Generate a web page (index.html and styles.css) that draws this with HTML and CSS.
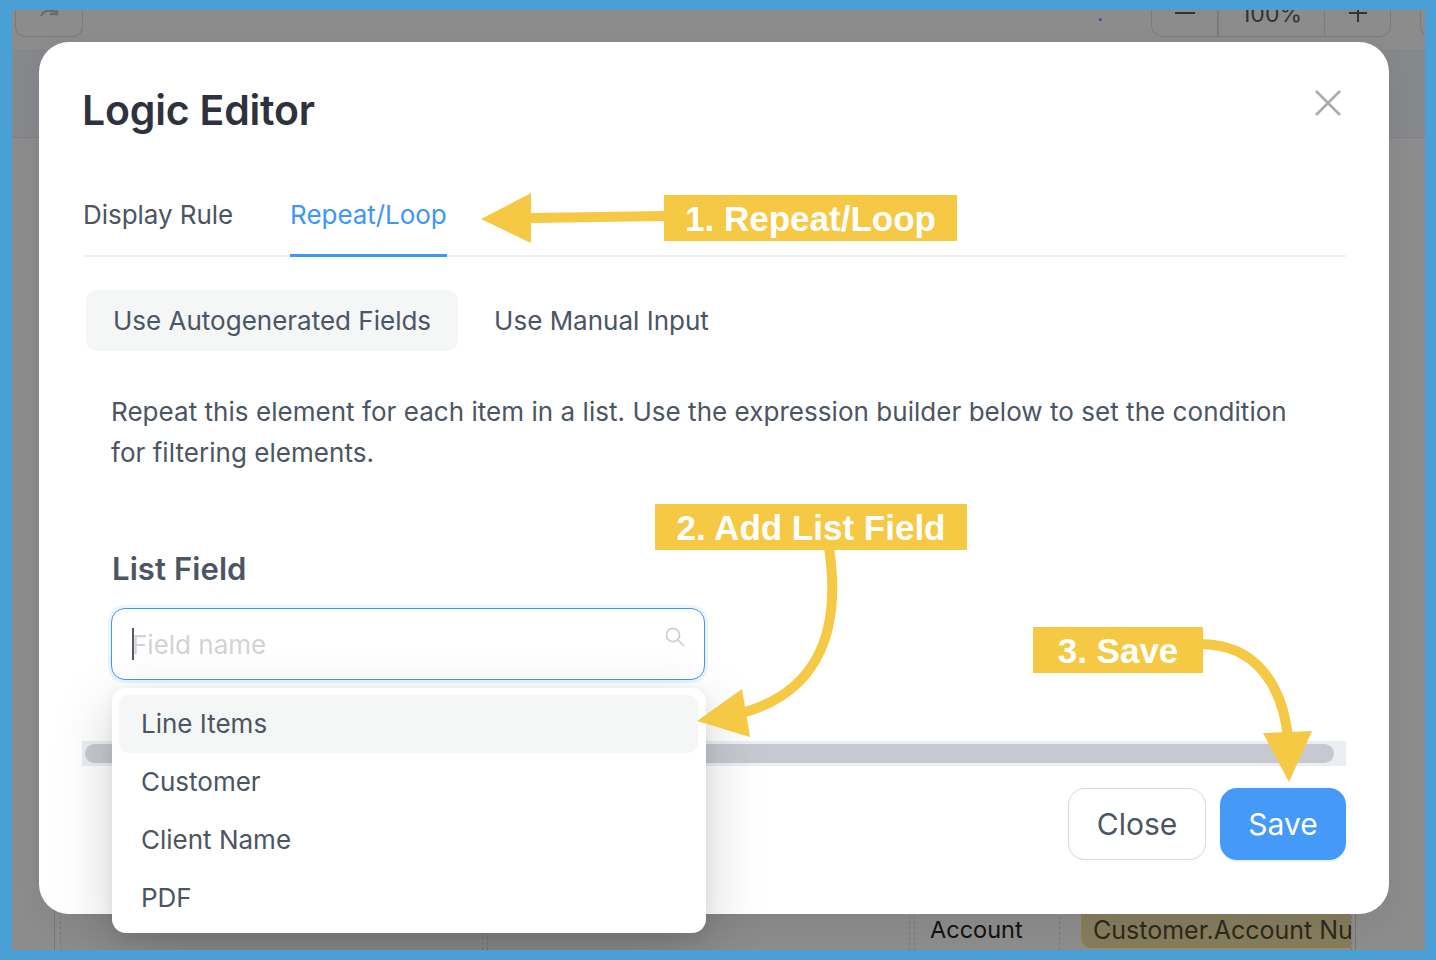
FILE: index.html
```html
<!DOCTYPE html>
<html lang="en">
<head>
<meta charset="utf-8">
<title>Logic Editor</title>
<link rel="stylesheet" href="styles.css">
</head>
<body>
<div class="frame">
  <div class="app">
    <div class="toolbar">
      <div class="redo">
        <svg class="redo-icon" viewBox="0 0 20 12"><path d="M2 11C5 5 11 4 18 8" /><path d="M18 1v8h-7" /></svg>
      </div>
      <span class="dot"></span>
      <div class="zoom-group">
        <span class="zoom-cell zoom-minus"><svg class="zoom-icon" viewBox="0 0 20 20"><path d="M0 10h20" /></svg></span>
        <span class="zoom-cell zoom-value">100%</span>
        <span class="zoom-cell zoom-plus"><svg class="zoom-icon" viewBox="0 0 20 20"><path d="M1 10h18M10 0v19" /></svg></span>
      </div>
      <div class="edge-btn"></div>
    </div>
    <div class="app-header"></div>
    <div class="app-body">
      <div class="sheet">
        <div class="cell cell-a"></div>
        <div class="cell cell-b"></div>
        <div class="cell cell-c">Account</div>
        <div class="cell cell-d"><span class="chip">Customer.Account Number</span></div>
      </div>
    </div>
  </div>

  <div class="modal">
    <h1 class="title">Logic Editor</h1>
    <button class="close-x" aria-label="Close">
      <svg viewBox="0 0 26 26"><path d="M1 1l24 24M25 1L1 25" /></svg>
    </button>
    <div class="tabs">
      <div class="tab">Display Rule</div>
      <div class="tab tab-active">Repeat/Loop</div>
    </div>
    <div class="segments">
      <div class="segment segment-on">Use Autogenerated Fields</div>
      <div class="segment">Use Manual Input</div>
    </div>
    <p class="intro">Repeat this element for each item in a list. Use the expression builder below to set the condition for filtering elements.</p>
    <div class="field-label">List Field</div>
    <div class="field">
      <div class="search">
        <span class="caret"></span>
        <span class="placeholder">Field name</span>
        <svg class="search-icon" viewBox="0 0 20 20"><circle cx="8" cy="8" r="6.6" /><path d="M13 13l6 6" /></svg>
      </div>
      <ul class="menu">
        <li class="menu-item menu-item-on">Line Items</li>
        <li class="menu-item">Customer</li>
        <li class="menu-item">Client Name</li>
        <li class="menu-item">PDF</li>
      </ul>
    </div>
    <div class="track"><div class="thumb"></div></div>
    <div class="footer">
      <button class="btn btn-close">Close</button>
      <button class="btn btn-save">Save</button>
    </div>
  </div>

  <svg class="arrows" viewBox="0 0 1436 960">
    <polygon class="fill" points="481,219 531,193 531,213 664,211 664,221 531,223 531,243" />
    <path class="line" d="M829 548C840 620 826 692 738 714" />
    <polygon class="fill" points="697,721 742,689 750,737" />
    <path class="line" d="M1200 644C1258 644 1283 688 1288 738" />
    <polygon class="fill" points="1263,733 1312,731 1289,782" />
  </svg>
  <div class="note note-1">1. Repeat/Loop</div>
  <div class="note note-2">2. Add List Field</div>
  <div class="note note-3">3. Save</div>
</div>
</body>
</html>
```
FILE: styles.css
```css
* { box-sizing: border-box; }
html, body { margin: 0; padding: 0; }
body { font-family: "Inter", "Liberation Sans", sans-serif; color: #4b5563; }

.frame {
  position: relative;
  width: 1436px;
  height: 960px;
  overflow: hidden;
  border-style: solid;
  border-color: #4a9fd4;
  border-width: 10px 11px 10px 12px;
  background: #8c8c8c;
}

/* dimmed application behind the dialog */
.app { display: flex; flex-direction: column; height: 100%; }
.toolbar {
  display: flex;
  align-items: flex-start;
  height: 41px;
  flex: none;
  overflow: hidden;
  border-bottom: 1px solid #858585;
}
.redo {
  width: 68px;
  height: 37px;
  margin: -10px 0 0 3px;
  flex: none;
  border: 1px solid #7b7b7b;
  border-top: 0;
  border-radius: 0 0 10px 10px;
  display: flex;
  justify-content: center;
}
.redo-icon { width: 20px; height: 12px; margin-top: 5px; fill: none; stroke: #6c6c6c; stroke-width: 2.4; }
.dot { width: 3px; height: 3px; border-radius: 50%; background: #2a55a8; margin: 8px 0 0 1016px; flex: none; }
.zoom-group {
  display: flex;
  height: 37px;
  margin: -10px 0 0 49px;
  flex: none;
  border: 1px solid #7b7b7b;
  border-top: 0;
  border-radius: 0 0 12px 12px;
  overflow: hidden;
  color: #333;
  font-size: 23px;
  line-height: 28px;
}
.zoom-cell { display: flex; justify-content: center; align-items: flex-start; }
.zoom-minus { width: 67px; border-right: 2px solid #7b7b7b; }
.zoom-value { width: 106px; border-right: 1px solid #7b7b7b; }
.zoom-plus { width: 65px; }
.zoom-icon { width: 20px; height: 20px; margin-top: 3px; fill: none; stroke: #333; stroke-width: 2; }
.edge-btn { width: 20px; height: 37px; margin: -10px 0 0 29px; border: 1px solid #7b7b7b; border-top: 0; border-right: 0; border-radius: 0 0 0 10px; flex: none; }
.app-header { height: 87px; flex: none; background: #87888c; border-bottom: 1px solid #808085; }
.app-body { flex: 1; display: flex; align-items: flex-end; }
.sheet {
  display: flex;
  height: 60px;
  margin-left: 42px;
  width: 1302px;
  border-left: 1px solid #767676;
  border-right: 1px solid #767676;
  flex: none;
  padding-left: 5px;
}
.cell { height: 100%; flex: none; border-left: 1px dashed #7a7a7a; }
.cell-a { width: 423px; margin-right: 4px; border-right: 1px dashed #7a7a7a; }
.cell-b { width: 423px; margin-right: 4px; border-right: 1px dashed #7a7a7a; }
.cell-c {
  width: 145px;
  padding: 23px 0 0 15px;
  color: #111;
  font-size: 23.5px;
  line-height: 34px;
}
.cell-d { width: 293px; padding-left: 21px; overflow: hidden; border-right: 1px dashed #7a7a7a; }
.chip {
  display: block;
  height: 50px;
  margin-top: 8px;
  padding: 14px 0 0 11px;
  width: 400px;
  white-space: nowrap;
  background: #857c5e;
  border: 1px solid #8f7f3f;
  border-radius: 10px;
  color: #2e2a18;
  font-size: 25px;
  line-height: 34px;
}

/* dialog */
.modal {
  position: absolute;
  left: 27px;
  top: 32px;
  width: 1350px;
  height: 872px;
  padding: 44px 43px 0 44px;
  background: #fff;
  border-radius: 30px;
  box-shadow: 0 10px 30px rgba(0, 0, 0, .06);
}
.title {
  margin: 0 0 0 -1px;
  font-size: 41px;
  line-height: 48px;
  font-weight: 600;
  letter-spacing: -.2px;
  color: #2e323e;
}
.close-x {
  position: absolute;
  top: 48px;
  right: 48px;
  width: 26px;
  height: 26px;
  padding: 0;
  border: 0;
  background: none;
}
.close-x svg { display: block; width: 26px; height: 26px; fill: none; stroke: #a9abb0; stroke-width: 2.6; }

.tabs {
  display: flex;
  gap: 57px;
  margin-top: 40px;
  border-bottom: 2px solid #f0f0f0;
}
.tab {
  margin-bottom: -2px;
  padding: 24px 0 25px;
  font-size: 26px;
  line-height: 34px;
  letter-spacing: -.05px;
}
.tab-active { color: #4096f8; box-shadow: inset 0 -3px 0 #4096f8; }

.segments { display: flex; gap: 9px; margin: 33px 0 0 3px; }
.segment {
  height: 61px;
  padding: 1px 27px 0;
  border-radius: 11px;
  font-size: 26px;
  line-height: 60px;
}
.segment-on { background: #f5f6f6; }

.intro {
  width: 1190px;
  margin: 40px 0 0 28px;
  font-size: 26px;
  line-height: 41px;
  letter-spacing: .04px;
}
.field-label {
  margin: 76px 0 0 29px;
  font-size: 31px;
  line-height: 39px;
  font-weight: 600;
  letter-spacing: .1px;
}
.field { position: relative; width: 594px; margin: 20px 0 0 28px; }
.search {
  position: relative;
  display: flex;
  align-items: center;
  height: 72px;
  padding: 2px 19px 0 20px;
  border: 1.5px solid #4096f8;
  border-radius: 14px;
  box-shadow: 0 0 0 3px #e9f5ff;
  background: #fff;
}
.caret { position: absolute; left: 20px; top: 19px; width: 2px; height: 32px; background: #555b66; }
.placeholder { flex: 1; font-size: 26px; line-height: 34px; color: #d2d3d6; }
.search-icon { width: 20px; height: 20px; margin-top: -16px; fill: none; stroke: #cfcfd2; stroke-width: 1.7; flex: none; }
.menu {
  position: absolute;
  top: 80px;
  left: 1px;
  width: 594px;
  height: 245px;
  margin: 0;
  padding: 7px 8px 7px 7px;
  list-style: none;
  background: #fff;
  border-radius: 14px;
  box-shadow: 0 18px 60px rgba(0, 0, 0, .18), 0 4px 14px rgba(0, 0, 0, .06);
}
.menu-item {
  height: 58px;
  padding: 0 22px;
  border-radius: 10px;
  font-size: 26px;
  line-height: 58px;
}
.menu-item-on { background: #f5f7f7; }

.track {
  height: 25px;
  margin: 61px 0 0 -1px;
  padding: 3px 12px 3px 3px;
  background: #eceef3;
}
.thumb { height: 19px; border-radius: 10px; background: #c6cad0; }

.footer { display: flex; justify-content: flex-end; gap: 14px; margin-top: 22px; }
.btn {
  height: 72px;
  border-radius: 17px;
  font-family: inherit;
  font-size: 30px;
  line-height: 40px;
}
.btn-close { width: 138px; background: #fff; border: 1px solid #d9d9d9; color: #4b5563; box-shadow: 0 2px 0 rgba(0, 0, 0, .015); }
.btn-save { width: 126px; background: #4599f9; border: 0; color: #fff; box-shadow: 0 2px 0 #eaf5ff; }

/* callouts drawn over the screenshot */
.arrows { position: absolute; left: -12px; top: -10px; width: 1436px; height: 960px; pointer-events: none; }
.arrows .fill { fill: #f5c944; }
.arrows .line { fill: none; stroke: #f5c944; stroke-width: 10; }
.note {
  position: absolute;
  display: flex;
  align-items: center;
  justify-content: center;
  height: 46px;
  padding-top: 2px;
  background: #f5c944;
  color: #fff;
  font-family: "Liberation Sans", Arial, sans-serif;
  font-weight: 700;
  font-size: 35px;
  white-space: nowrap;
}
.note-1 { left: 652px; top: 185px; width: 293px; }
.note-2 { left: 643px; top: 494px; width: 312px; }
.note-3 { left: 1021px; top: 617px; width: 170px; }
```
